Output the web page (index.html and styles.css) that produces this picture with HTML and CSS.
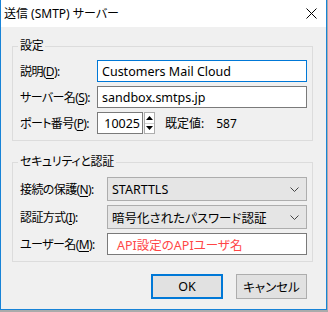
FILE: index.html
```html
<!DOCTYPE html>
<html lang="ja">
<head>
<meta charset="utf-8">
<link rel="stylesheet" href="styles.css">
</head>
<body>
<div class="window">
  <div class="titlebar">
    <span class="title">送信 (SMTP) サーバー</span>
    <svg class="close" width="11" height="11" viewBox="0 0 11 11"><path d="M0.5 0.5 L10.5 10.5 M10.5 0.5 L0.5 10.5" stroke="#000" stroke-width="1" fill="none"/></svg>
  </div>
  <div class="content">
    <fieldset class="group g1">
      <legend>設定</legend>
      <div class="row"><span class="lbl">説明(<u>D</u>):</span><div class="field focus">Customers Mail Cloud</div></div>
      <div class="row"><span class="lbl">サーバー名(<u>S</u>):</span><div class="field">sandbox.smtps.jp</div></div>
      <div class="row"><span class="lbl">ポート番号(<u>P</u>):</span>
        <div class="field port">10025</div>
        <div class="spin">
          <div class="spin-btn"><svg width="7" height="4" viewBox="0 0 7 4"><path d="M3.5 0 L7 4 L0 4 Z" fill="#000"/></svg></div>
          <div class="spin-btn"><svg width="7" height="4" viewBox="0 0 7 4"><path d="M0 0 L7 0 L3.5 4 Z" fill="#000"/></svg></div>
        </div>
        <span class="deflbl">既定値:</span><span class="defval">587</span>
      </div>
    </fieldset>
    <fieldset class="group g2">
      <legend>セキュリティと認証</legend>
      <div class="row tall"><span class="lbl">接続の保護(<u>N</u>):</span><div class="combo"><span>STARTTLS</span><svg width="9" height="5" viewBox="0 0 9 5"><path d="M0.5 0.5 L4.5 4.5 L8.5 0.5" stroke="#444" stroke-width="1" fill="none"/></svg></div></div>
      <div class="row tall"><span class="lbl">認証方式(<u>I</u>):</span><div class="combo"><span>暗号化されたパスワード認証</span><svg width="9" height="5" viewBox="0 0 9 5"><path d="M0.5 0.5 L4.5 4.5 L8.5 0.5" stroke="#444" stroke-width="1" fill="none"/></svg></div></div>
      <div class="row"><span class="lbl">ユーザー名(<u>M</u>):</span><div class="field red">API設定のAPIユーザ名</div></div>
    </fieldset>
    <div class="buttons">
      <button class="btn default">OK</button>
      <button class="btn">キャンセル</button>
    </div>
  </div>
</div>
</body>
</html>
```
FILE: styles.css
```css
body {
  margin: 0;
  background: #ababab;
  font-family: "Noto Sans", "Noto Sans CJK JP", sans-serif;
  font-size: 12px;
  font-feature-settings: "palt";
  color: #000;
}
.window {
  width: 327px;
  height: 310px;
  box-sizing: border-box;
  border: 1px solid #1883d7;
  border-top: none;
  background: #f0f0f0;
  display: flex;
  flex-direction: column;
}
.titlebar {
  height: 27px;
  flex: none;
  background: #fff;
  display: flex;
  align-items: center;
  justify-content: space-between;
  padding: 0 9px 0 3px;
}
.title {
  font-size: 12px;
  line-height: 16px;
}
.content {
  padding: 11px 13px 0 11px;
}
.group {
  margin: 0;
  border: 1px solid #dcdcdc;
  min-width: 0;
}
.group legend {
  padding: 0 2px;
  margin-left: -2px;
  font-size: 12px;
  line-height: 16px;
  letter-spacing: -0.3px;
}
.g1 {
  padding: 6px 5px 6px 7px;
}
.g2 {
  margin-top: 13px;
  padding: 7px 5px 6px 7px;
}
.row {
  display: flex;
  align-items: center;
  height: 22px;
}
.row + .row {
  margin-top: 4px;
}
.row.tall {
  height: 24px;
}
.lbl {
  flex: none;
  white-space: nowrap;
  letter-spacing: -0.6px;
}
.g1 .lbl { width: 77px; }
.g2 .lbl { width: 87px; }
.lbl u {
  text-decoration-thickness: 1px;
  text-underline-offset: 2px;
}
.field {
  flex: 1;
  height: 22px;
  box-sizing: border-box;
  border: 1px solid #7a7a7a;
  background: #fff;
  padding-left: 4px;
  display: flex;
  align-items: center;
  white-space: nowrap;
  overflow: hidden;
  font-size: 12.5px;
}
.field.focus {
  border-color: #0078d7;
}
.field.port {
  flex: none;
  width: 46px;
  justify-content: flex-end;
  padding: 0 2px 0 0;
}
.field.red {
  color: #ff4646;
  padding-left: 9px;
}
.spin {
  flex: none;
  width: 11px;
  height: 22px;
  margin-left: 1px;
  display: flex;
  flex-direction: column;
  box-sizing: border-box;
  border: 1px solid #adadad;
  background: #fff;
}
.spin-btn {
  flex: 1;
  display: flex;
  align-items: center;
  justify-content: center;
}
.spin-btn + .spin-btn {
  border-top: 1px solid #d0d0d0;
}
.deflbl {
  margin-left: 10px;
}
.defval {
  margin-left: 12px;
}
.combo {
  flex: 1;
  height: 24px;
  box-sizing: border-box;
  border: 1px solid #adadad;
  background: #e5e5e5;
  padding: 0 7px 0 4px;
  display: flex;
  align-items: center;
  justify-content: space-between;
  font-size: 12.5px;
  white-space: nowrap;
}
.buttons {
  display: flex;
  justify-content: flex-end;
  gap: 13px;
  margin-top: 12px;
  padding-right: 6px;
}
.btn {
  width: 71px;
  height: 25px;
  box-sizing: border-box;
  border: 1px solid #adadad;
  background: #e1e1e1;
  font-family: "Noto Sans", "Noto Sans CJK JP", sans-serif;
  font-size: 12.5px;
  font-feature-settings: "palt";
  color: #000;
  padding: 0;
  margin: 0;
}
.btn.default {
  width: 72px;
  border: 2px solid #0078d7;
}
```
